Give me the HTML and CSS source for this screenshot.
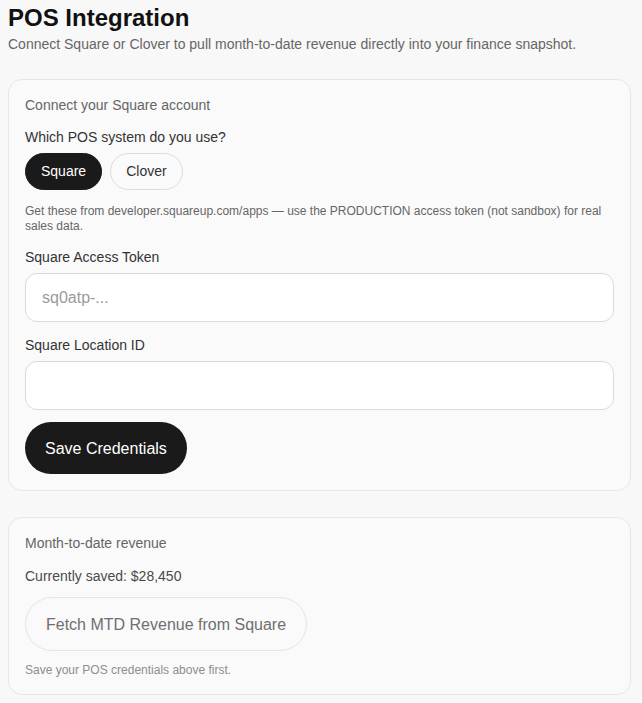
FILE: index.html
```html
<!DOCTYPE html>
<html lang="en">
<head>
<meta charset="utf-8">
<title>POS Integration</title>
<link rel="stylesheet" href="styles.css">
</head>
<body>
<main class="page">
  <h1 class="title">POS Integration</h1>
  <p class="subtitle">Connect Square or Clover to pull month-to-date revenue directly into your finance snapshot.</p>

  <section class="card card-connect">
    <h2 class="card-heading">Connect your Square account</h2>
    <div class="question">Which POS system do you use?</div>
    <div class="pills">
      <button class="pill pill-active" type="button">Square</button>
      <button class="pill" type="button">Clover</button>
    </div>
    <p class="help">Get these from developer.squareup.com/apps — use the PRODUCTION access token (not sandbox) for real sales data.</p>
    <div class="field">
      <label class="field-label" for="token">Square Access Token</label>
      <input class="field-input" id="token" type="text" placeholder="sq0atp-...">
    </div>
    <div class="field">
      <label class="field-label" for="loc">Square Location ID</label>
      <input class="field-input" id="loc" type="text">
    </div>
    <button class="btn btn-primary" type="button">Save Credentials</button>
  </section>

  <section class="card card-revenue">
    <h2 class="card-heading">Month-to-date revenue</h2>
    <div class="saved">Currently saved: $28,450</div>
    <button class="btn btn-disabled" type="button">Fetch MTD Revenue from Square</button>
    <p class="note">Save your POS credentials above first.</p>
  </section>
</main>
</body>
</html>
```

FILE: styles.css
```css
* { box-sizing: border-box; }

html, body {
  margin: 0;
  padding: 0;
  background: #f8f8f8;
}

body {
  font-family: "Liberation Sans", Arial, sans-serif;
  color: #222;
}

.page {
  width: 623px;
  margin-left: 8px;
  padding-top: 4px;
  display: flex;
  flex-direction: column;
}

.title {
  margin: 0;
  font-size: 24px;
  line-height: 28px;
  font-weight: 700;
  color: #111;
}

.subtitle {
  margin: 4px 0 0;
  font-size: 14px;
  line-height: 16px;
  color: #666;
}

.card {
  background: #fafafa;
  border: 1px solid #e6e6e6;
  border-radius: 14px;
  padding: 16px;
  display: flex;
  flex-direction: column;
  align-items: flex-start;
}

.card-connect { margin-top: 27px; }
.card-revenue { margin-top: 26px; }

.card-heading {
  margin: 0;
  font-size: 14px;
  line-height: 18px;
  font-weight: 400;
  color: #666;
}

.question {
  margin-top: 14px;
  font-size: 14px;
  line-height: 18px;
  color: #333;
}

.pills {
  margin-top: 7px;
  display: flex;
  gap: 8px;
}

.pill {
  font-family: inherit;
  font-size: 14px;
  line-height: 17px;
  padding: 9px 15px;
  border-radius: 999px;
  border: 1px solid #dcdcdc;
  background: #fafafa;
  color: #333;
}

.pill-active {
  background: #1a1a1a;
  border-color: #1a1a1a;
  color: #fff;
}

.help {
  margin: 14px 0 0;
  font-size: 12px;
  line-height: 15px;
  color: #666;
}

.field {
  align-self: stretch;
  margin-top: 14px;
  display: flex;
  flex-direction: column;
  gap: 7px;
}

.field-label {
  font-size: 14px;
  line-height: 18px;
  color: #333;
}

.field-input {
  font-family: inherit;
  font-size: 16px;
  line-height: 19px;
  height: 49px;
  padding: 0 16px;
  border: 1px solid #dadada;
  border-radius: 12px;
  background: #fff;
  color: #222;
  outline: none;
}

.field-input::placeholder { color: #9a9a9a; }

.btn {
  font-family: inherit;
  font-size: 16px;
  line-height: 19px;
  padding: 16.5px 20px;
  border-radius: 999px;
}

.btn-primary {
  margin-top: 12px;
  background: #1a1a1a;
  color: #fff;
  border: none;
}

.saved {
  margin-top: 15px;
  font-size: 14px;
  line-height: 18px;
  color: #4a4a4a;
}

.btn-disabled {
  margin-top: 12px;
  background: #fafafa;
  border: 1px solid #e4e4e4;
  color: #6f6f6f;
}

.note {
  margin: 12px 0 0;
  font-size: 12px;
  line-height: 15px;
  color: #8e8e8e;
}
```
